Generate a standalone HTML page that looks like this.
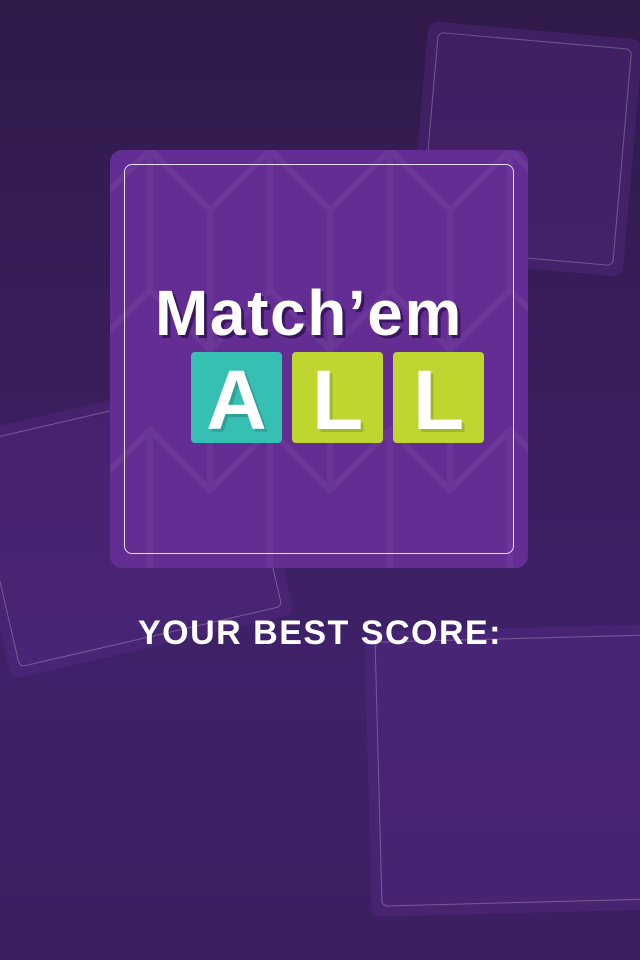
<!DOCTYPE html>
<html><head><style>
*{margin:0;padding:0}
body{width:640px;height:960px;overflow:hidden;position:relative;background:linear-gradient(180deg,#2f1a4a 0%,#3a1e5c 40%,#3e2168 70%,#3b1f60 100%);font-family:"Liberation Sans",sans-serif}
.bc{position:absolute;background:rgba(100,45,150,0.3);border-radius:10px}
.bc i{position:absolute;left:10px;top:10px;right:10px;bottom:10px;border:1px solid rgba(255,255,255,0.25);border-radius:6px}
.main{position:absolute;left:110px;top:150px;width:418px;height:418px;background:#632d93;border-radius:12px;overflow:hidden}
.inner{position:absolute;left:14px;top:14px;width:388px;height:388px;border:1px solid #e8dcf2;border-radius:8px}
.title{position:absolute;left:155px;top:276px;font-size:64px;font-weight:bold;color:#fff;letter-spacing:1.6px;text-shadow:3px 3px 0 #3a1660}
.tile{position:absolute;top:352px;width:91px;height:91px;border-radius:4px;color:#fff;font-weight:bold;font-size:84px;text-align:center;line-height:96px;text-shadow:3px 3px 0 rgba(0,0,0,0.15)}
.score{position:absolute;left:0;width:640px;text-align:center;top:614px;font-size:34px;font-weight:bold;color:#fff;letter-spacing:1.5px}
</style></head><body>
<div class="bc" style="left:418px;top:30px;width:215px;height:238px;transform:rotate(5deg)"><i></i></div>
<div class="bc" style="left:-20px;top:400px;width:290px;height:250px;transform:rotate(-13deg)"><i></i></div>
<div class="bc" style="left:368px;top:628px;width:300px;height:285px;transform:rotate(-1.5deg)"><i></i></div>
<div class="main">
<svg width="418" height="418" style="position:absolute;left:0;top:0" stroke="rgba(255,255,255,0.05)" stroke-width="6" fill="none">
<path d="M-20 60 L40 0 L100 60 L160 0 L220 60 L280 0 L340 60 L400 0 L460 60 M40 0 V140 M160 0 V140 M280 0 V140 M400 0 V140 M-20 200 L40 140 L100 200 L160 140 L220 200 L280 140 L340 200 L400 140 L460 200 M100 60 V200 M220 60 V200 M340 60 V200 M-20 60 V200 M40 140 L100 200 M-20 340 L40 280 L100 340 L160 280 L220 340 L280 280 L340 340 L400 280 L460 340 M40 280 V420 M160 280 V420 M280 280 V420 M400 280 V420 M100 200 V340 M220 200 V340 M340 200 V340"/>
</svg>
<div class="inner"></div>
</div>
<div class="title">Match’em</div>
<div class="tile" style="left:191px;background:#36bfb3">A</div>
<div class="tile" style="left:292px;background:#bfd631">L</div>
<div class="tile" style="left:393px;background:#bfd631">L</div>
<div class="score">YOUR BEST SCORE:</div>
</body></html>
